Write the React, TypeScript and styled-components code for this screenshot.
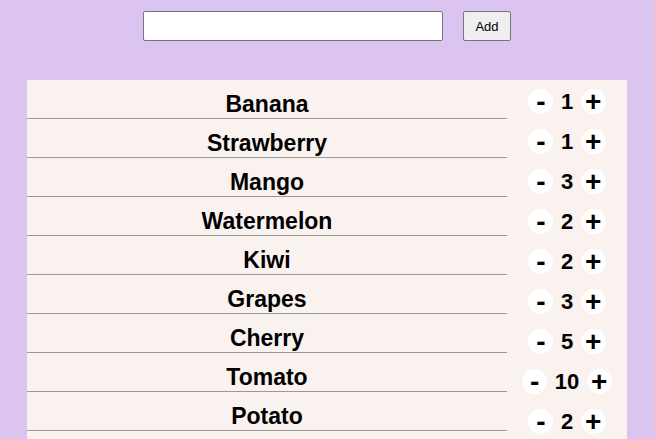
import { FC, useState } from "react";
import styled, { createGlobalStyle } from "styled-components";

interface Item {
    name: string;
    count: number;
}

const initialItems: Item[] = [
    { name: "Banana", count: 1 },
    { name: "Strawberry", count: 1 },
    { name: "Mango", count: 3 },
    { name: "Watermelon", count: 2 },
    { name: "Kiwi", count: 2 },
    { name: "Grapes", count: 3 },
    { name: "Cherry", count: 5 },
    { name: "Tomato", count: 10 },
    { name: "Potato", count: 2 },
];

const GlobalStyle = createGlobalStyle`
    html, body {
        margin: 0;
        padding: 0;
        background: #dbc4f0;
        font-family: "Liberation Sans", Arial, sans-serif;
        overflow: hidden;
    }
`;

export default function App() {
    const [items, setItems] = useState<Item[]>(initialItems);
    const [text, setText] = useState("");

    const addItem = () => {
        if (!text.trim()) return;
        setItems([...items, { name: text.trim(), count: 1 }]);
        setText("");
    };

    const changeCount = (index: number, delta: number) => {
        setItems(
            items.map((item, i) =>
                i === index
                    ? { ...item, count: Math.max(0, item.count + delta) }
                    : item
            )
        );
    };

    return (
        <Page>
            <GlobalStyle />
            <AddForm>
                <TextInput
                    value={text}
                    onChange={(e) => setText(e.target.value)}
                />
                <AddButton onClick={addItem}>Add</AddButton>
            </AddForm>
            <ListPanel>
                <NameColumn>
                    {items.map((item) => (
                        <NameRow key={item.name}>{item.name}</NameRow>
                    ))}
                </NameColumn>
                <CounterColumn>
                    {items.map((item, index) => (
                        <Counter
                            key={item.name}
                            count={item.count}
                            onMinus={() => changeCount(index, -1)}
                            onPlus={() => changeCount(index, 1)}
                        />
                    ))}
                </CounterColumn>
            </ListPanel>
        </Page>
    );
}

interface CounterProps {
    count: number;
    onMinus: () => void;
    onPlus: () => void;
}

const Counter: FC<CounterProps> = ({ count, onMinus, onPlus }) => (
    <CounterRow>
        <RoundButton onClick={onMinus}>-</RoundButton>
        <Count>{count}</Count>
        <RoundButton onClick={onPlus}>+</RoundButton>
    </CounterRow>
);

const Page = styled.div`
    display: flex;
    flex-direction: column;
    align-items: center;
    padding-top: 11px;
`;

const AddForm = styled.div`
    display: flex;
    gap: 20px;
    margin-right: 1px;
`;

const TextInput = styled.input`
    width: 300px;
    height: 30px;
    box-sizing: border-box;
    border: 1px solid #767676;
    border-radius: 2px;
    background: #fff;
    padding: 1px 2px;
`;

const AddButton = styled.button`
    width: 48px;
    height: 30px;
    box-sizing: border-box;
    border: 1px solid #767676;
    border-radius: 2px;
    background: #efefef;
    font-family: "Liberation Sans", Arial, sans-serif;
    font-size: 13px;
    color: #000;
    padding: 0;
`;

const ListPanel = styled.div`
    width: 600px;
    margin-top: 39px;
    margin-right: 1px;
    background: #faf2ef;
    display: flex;
    align-items: flex-start;
`;

const NameColumn = styled.div`
    width: 480px;
    display: flex;
    flex-direction: column;
`;

const NameRow = styled.div`
    padding: 11px 0 1px;
    line-height: 26px;
    font-size: 23px;
    font-weight: bold;
    text-align: center;
    color: #000;
    border-bottom: 1px solid #999;
`;

const CounterColumn = styled.div`
    width: 120px;
    display: flex;
    flex-direction: column;
    padding-top: 9px;
`;

const CounterRow = styled.div`
    height: 40px;
    display: flex;
    justify-content: center;
    align-items: flex-start;
    gap: 7.5px;
`;

const RoundButton = styled.button`
    width: 25px;
    height: 25px;
    border-radius: 50%;
    border: none;
    background: #fff;
    padding: 0;
    display: flex;
    align-items: center;
    justify-content: center;
    font-family: "Liberation Sans", Arial, sans-serif;
    font-size: 28px;
    font-weight: bold;
    line-height: 25px;
    color: #000;
`;

const Count = styled.span`
    font-size: 22px;
    font-weight: bold;
    line-height: 25px;
    color: #000;
`;
